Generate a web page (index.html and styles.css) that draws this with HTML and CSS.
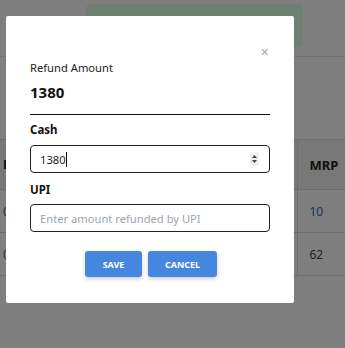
FILE: index.html
```html
<!DOCTYPE html>
<html>
<head>
<meta charset="utf-8">
<link rel="stylesheet" href="styles.css">
</head>
<body>
<div class="page">
  <div class="topbar">
    <div class="alert"></div>
  </div>
  <table class="grid">
    <thead>
      <tr><th class="c1">Bill</th><th class="c2"></th><th class="c3">MRP</th></tr>
    </thead>
    <tbody>
      <tr><td class="c1 link">0012</td><td class="c2"></td><td class="c3 link">10</td></tr>
      <tr><td class="c1 link">0013</td><td class="c2"></td><td class="c3">62</td></tr>
    </tbody>
  </table>
</div>
<div class="overlay">
  <div class="modal">
    <div class="close-row"><span class="close">&#x2715;</span></div>
    <div class="label">Refund Amount</div>
    <div class="amount">1380</div>
    <div class="rule"></div>
    <div class="field-label">Cash</div>
    <div class="field">
      <span class="value">1380</span><span class="caret"></span>
      <span class="spin"><svg width="9" height="14" viewBox="0 0 9 14"><path d="M2 6 L4.5 3 L7 6 Z M2 8 L4.5 11 L7 8 Z" fill="#444"/></svg></span>
    </div>
    <div class="field-label upi">UPI</div>
    <input class="field input" type="text" placeholder="Enter amount refunded by UPI">
    <div class="actions">
      <button class="btn save">Save</button>
      <button class="btn cancel">Cancel</button>
    </div>
  </div>
</div>
</body>
</html>
```
FILE: styles.css
```css
* { box-sizing: border-box; }
html, body { margin: 0; padding: 0; }
body {
  width: 345px;
  height: 348px;
  overflow: hidden;
  background: #fff;
  font-family: "Noto Sans", "Open Sans", sans-serif;
  color: #222;
}
.page { width: 345px; overflow: hidden; }
.topbar {
  height: 57px;
  border-bottom: 1px solid #e6e6e6;
  padding-top: 4px;
}
.alert {
  margin-left: 86px;
  width: 217px;
  height: 43px;
  border-radius: 5px;
  background: #dcffe6;
}
.grid {
  margin-top: 82px;
  border-collapse: collapse;
  width: 345px;
  table-layout: fixed;
  font-size: 12px;
}
.grid th, .grid td {
  border-top: 1px solid #dcdcdc;
  border-bottom: 1px solid #dcdcdc;
  text-align: left;
}
.grid th { height: 50px; background: #f0f0f0; font-weight: 700; color: #222; }
.grid td { height: 43px; color: #444; }
.c1 { width: 200px; padding-left: 3px; }
.c2 { width: 97px; }
.c3 { padding-left: 12px; border-left: 1px solid #dcdcdc; }
.grid th.c3 { font-size: 13px; }
.link { color: #1e5fa8 !important; }
.grid td.c3.link { color: #3a63a0 !important; }

.overlay {
  position: fixed;
  inset: 0;
  background: rgba(0,0,0,0.5);
}
.modal {
  position: absolute;
  left: 6px;
  top: 16px;
  width: 288px;
  height: 287px;
  background: #fff;
  border-radius: 2px;
  padding: 28px 24px 0 24px;
}
.close-row {
  height: 16px;
  display: flex;
  justify-content: flex-end;
  align-items: center;
  padding-right: 1px;
}
.close { color: #aaa; font-size: 11px; line-height: 16px; }
.label { font-size: 11.2px; line-height: 16px; color: #222; }
.amount { font-size: 15px; font-weight: 700; line-height: 20px; margin-top: 6px; color: #111; }
.rule { margin-top: 12px; border-top: 1px solid #111; }
.field-label { font-size: 11.5px; font-weight: 700; line-height: 16px; margin-top: 7px; color: #111; }
.field-label.upi { margin-top: 9px; }
.field {
  display: flex;
  align-items: center;
  width: 240px;
  height: 28px;
  margin-top: 7px;
  border: 1px solid #222;
  border-radius: 4px;
  padding: 0 10px 0 9px;
  font-family: inherit;
  font-size: 11.2px;
  color: #222;
  background: #fff;
}
.input { margin-top: 6px; outline: none; }
.input::placeholder { color: #9ca3ad; }
.caret { width: 1px; height: 15px; background: #111; }
.spin {
  margin-left: auto;
  width: 9px;
  height: 14px;
  background: #f0f0f0;
  display: flex;
}
.actions {
  margin-top: 19px;
  display: flex;
  justify-content: center;
  gap: 6px;
  padding-left: 2px;
}
.btn {
  height: 26px;
  border: none;
  border-radius: 3px;
  background: #4587de;
  color: #fff;
  font-family: inherit;
  font-size: 9px;
  font-weight: 700;
  text-transform: uppercase;
  box-shadow: 0 2px 4px rgba(0,0,0,0.2);
  padding: 0;
}
.save { width: 57px; }
.cancel { width: 69px; }
```
